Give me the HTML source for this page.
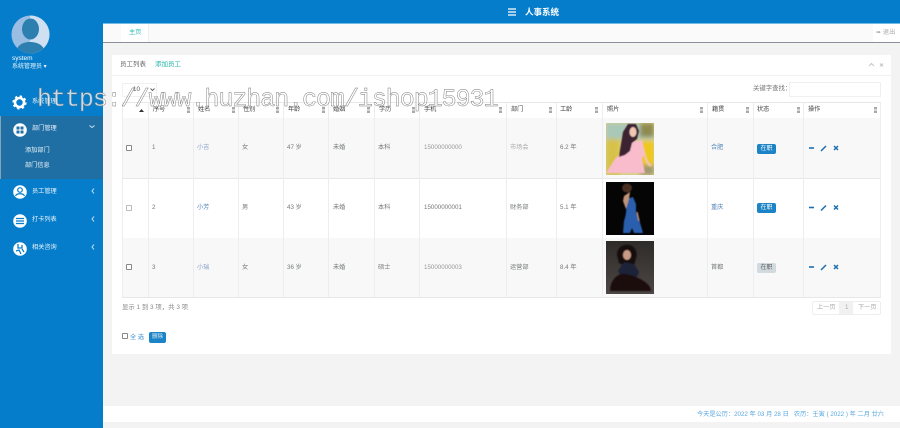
<!DOCTYPE html>
<html lang="zh"><head><meta charset="utf-8"><title>人事系统</title>
<style>
*{box-sizing:border-box}
html,body{margin:0;padding:0;width:900px;height:428px;overflow:hidden;background:#f3f3f3}
body{position:relative;font-family:"Liberation Sans","Noto Sans CJK SC",sans-serif;font-size:6.2px;color:#77797b}
#wrap{position:absolute;left:0;top:0;width:900px;height:428px;filter:blur(.35px)}
.a{position:absolute}
.t{position:absolute;white-space:nowrap;line-height:10px;height:10px;transform:translateY(-5px)}
.b{background:#fff}
.v{position:absolute;top:102px;height:195px;width:1px;background:#ededed}
.h{position:absolute;left:122px;width:759px;height:1px;background:#e7e7e7}
.th{color:#444}
.s{position:absolute;top:107px;width:3px;height:6px;background:linear-gradient(#aaa 0 40%,#fff 40% 55%,#aaa 55%)}
.m{color:#fff;font-size:6.2px;opacity:.92}
.ck{position:absolute;width:6px;height:6px;border:1px solid #888;border-radius:1px;background:#fff}
.lab{position:absolute;width:19px;height:10px;border-radius:2px;background:#1c84c6;color:#fff;font-size:6px;line-height:10px;text-align:center}
#wm{position:absolute;left:37px;top:85px;font:25px/30px "Liberation Mono",monospace;letter-spacing:-1.05px;color:rgba(255,255,255,.75);-webkit-text-stroke:.45px #777;white-space:nowrap}
</style></head><body>
<div id="wrap">
<div class="a" style="left:0;top:0;width:900px;height:23px;background:#067dcb"></div>
<div class="a" style="left:103px;top:23px;width:797px;height:1px;background:#6fbbe8"></div>
<div class="a" style="left:0;top:0;width:103px;height:428px;background:#067dcb"></div>
<!-- header title -->
<svg class="a" style="left:508px;top:8px" width="8" height="8"><path d="M0 1h8M0 4h8M0 7h8" stroke="#fff" stroke-width="1.3"/></svg>
<div class="t" style="left:525px;top:12px;color:#fff;font-size:8.5px;font-weight:bold">人事系统</div>
<!-- tabs -->
<div class="a" style="left:103px;top:24px;width:797px;height:18px;background:#fafafa"></div>
<div class="a b" style="left:121px;top:24px;width:28px;height:18px;border-right:1px solid #eee"></div>
<div class="t" style="left:129px;top:33px;color:#2bbdb0">主页</div>
<div class="a b" style="left:873px;top:24px;width:27px;height:18px"></div>
<div class="t" style="left:876px;top:33px;color:#aaa">➠ 退出</div>
<div class="a" style="left:103px;top:42px;width:797px;height:1.4px;background:#8a8f99"></div>
<!-- panel -->
<div class="a b" style="left:112px;top:55px;width:779px;height:299px"></div>
<div class="a" style="left:112px;top:75px;width:779px;height:1px;background:#f1f1f1"></div>
<div class="t" style="left:120px;top:65px;color:#666;font-size:6.5px">员工列表</div>
<div class="t" style="left:155px;top:65px;color:#1fb5a8;font-size:6.5px">添加员工</div>
<svg class="a" style="left:869px;top:62px" width="15" height="6"><path d="M0 4l2.500-2.500L5 4M11 1.500l3 3M14 1.500l-3 3" stroke="#c4c4c4" fill="none"/></svg>
<div class="a" style="left:122px;top:83px;width:35px;height:14px;border:1px solid #f0f0f0"></div>
<div class="t" style="left:133px;top:90px;color:#555">10</div>
<svg class="a" style="left:150px;top:88px" width="5" height="4"><path d="M.5.500l2 2 2-2" stroke="#666" fill="none"/></svg>
<div class="t" style="left:753px;top:89px;color:#777;font-size:6.400px">关键字查找：</div>
<div class="a b" style="left:789px;top:82px;width:92px;height:15px;border:1px solid #f0f0f0"></div>
<!-- table -->
<div class="a" style="left:122px;top:118px;width:759px;height:61px;background:#f8f8f8"></div>
<div class="a" style="left:122px;top:238px;width:759px;height:59px;background:#f8f8f8"></div>
<div class="h" style="top:102px"></div><div class="h" style="top:178px"></div><div class="h" style="top:297px"></div>
<div class="v" style="left:122px"></div><div class="v" style="left:148px"></div><div class="v" style="left:193px"></div><div class="v" style="left:238px"></div><div class="v" style="left:283px"></div><div class="v" style="left:328px"></div><div class="v" style="left:374px"></div><div class="v" style="left:419px"></div><div class="v" style="left:506px"></div><div class="v" style="left:556px"></div><div class="v" style="left:602px"></div><div class="v" style="left:707px"></div><div class="v" style="left:753px"></div><div class="v" style="left:803px"></div><div class="v" style="left:880px"></div>
<svg class="a" style="left:139px;top:108px" width="5" height="5"><path d="M0 4l2.500-3L5 4z" fill="#333"/></svg>
<div class="t th" style="left:153px;top:110px">序号</div><div class="t th" style="left:198px;top:110px">姓名</div><div class="t th" style="left:243px;top:110px">性别</div><div class="t th" style="left:288px;top:110px">年龄</div><div class="t th" style="left:333px;top:110px">婚姻</div><div class="t th" style="left:379px;top:110px">学历</div><div class="t th" style="left:424px;top:110px">手机</div><div class="t th" style="left:511px;top:110px">部门</div><div class="t th" style="left:560px;top:110px">工龄</div><div class="t th" style="left:607px;top:110px">照片</div><div class="t th" style="left:712px;top:110px">籍贯</div><div class="t th" style="left:757px;top:110px">状态</div><div class="t th" style="left:808px;top:110px">操作</div>
<i class="s" style="left:187px"></i><i class="s" style="left:232px"></i><i class="s" style="left:276px"></i><i class="s" style="left:322px"></i><i class="s" style="left:367px"></i><i class="s" style="left:412px"></i><i class="s" style="left:499px"></i><i class="s" style="left:549px"></i><i class="s" style="left:595px"></i><i class="s" style="left:700px"></i><i class="s" style="left:746px"></i><i class="s" style="left:797px"></i><i class="s" style="left:874px"></i>
<!-- row 1 -->
<div class="ck" style="left:126px;top:145px"></div>
<div class="t" style="left:152px;top:148px">1</div><div class="t" style="left:197px;top:148px;color:#8ba3cc">小吉</div><div class="t" style="left:242px;top:148px">女</div><div class="t" style="left:287px;top:148px">47 岁</div><div class="t" style="left:333px;top:148px">未婚</div><div class="t" style="left:378px;top:148px">本科</div><div class="t" style="left:424px;top:148px;color:#999">15000000000</div><div class="t" style="left:510px;top:148px;color:#aaa">市场会</div><div class="t" style="left:560px;top:148px">6.2 年</div><div class="t" style="left:711px;top:148px;color:#4f86b8">合肥</div>
<div class="lab" style="left:757px;top:144px">在职</div>
<!-- row 2 -->
<div class="ck" style="left:126px;top:205px;border-color:#bbb"></div>
<div class="t" style="left:152px;top:208px">2</div><div class="t" style="left:197px;top:208px;color:#4f86b8">小芳</div><div class="t" style="left:242px;top:208px">男</div><div class="t" style="left:287px;top:208px">43 岁</div><div class="t" style="left:333px;top:208px">未婚</div><div class="t" style="left:378px;top:208px">本科</div><div class="t" style="left:424px;top:208px">15000000001</div><div class="t" style="left:510px;top:208px">财务部</div><div class="t" style="left:560px;top:208px">5.1 年</div><div class="t" style="left:711px;top:208px;color:#4f86b8">重庆</div>
<div class="lab" style="left:757px;top:203px">在职</div>
<!-- row 3 -->
<div class="ck" style="left:126px;top:264px"></div>
<div class="t" style="left:152px;top:268px">3</div><div class="t" style="left:197px;top:268px;color:#8ba3cc">小瑞</div><div class="t" style="left:242px;top:268px">女</div><div class="t" style="left:287px;top:268px">36 岁</div><div class="t" style="left:333px;top:268px">未婚</div><div class="t" style="left:378px;top:268px">硕士</div><div class="t" style="left:424px;top:268px;color:#999">15000000003</div><div class="t" style="left:510px;top:268px">运营部</div><div class="t" style="left:560px;top:268px">8.4 年</div><div class="t" style="left:711px;top:268px">首都</div>
<div class="lab" style="left:757px;top:263px;background:#d1dade;color:#5e5e5e">在职</div>
<!-- action icons -->
<svg class="a" style="left:809px;top:144px" width="32" height="128">
<g fill="none" stroke="#1f6fb0"><path d="M0 4h5" stroke-width="1.600"/><path d="M12 7l5-5" stroke-width="1.500"/><path d="M25 2l4 4M29 2l-4 4" stroke-width="1.500"/></g>
<g transform="translate(0,59.500)" fill="none" stroke="#1f6fb0"><path d="M0 4h5" stroke-width="1.600"/><path d="M12 7l5-5" stroke-width="1.500"/><path d="M25 2l4 4M29 2l-4 4" stroke-width="1.500"/></g>
<g transform="translate(0,119)" fill="none" stroke="#1f6fb0"><path d="M0 4h5" stroke-width="1.600"/><path d="M12 7l5-5" stroke-width="1.500"/><path d="M25 2l4 4M29 2l-4 4" stroke-width="1.500"/></g>
</svg>
<!-- photo 1 -->
<svg class="a" style="left:606px;top:123px" width="48" height="52" viewBox="0 0 48 52">
<defs><filter id="f"><feGaussianBlur stdDeviation=".5"/></filter><filter id="g"><feGaussianBlur stdDeviation="2"/></filter></defs>
<rect width="48" height="52" fill="#d9cf8a"/><g filter="url(#g)"><rect width="48" height="16" fill="#a9c8b8"/><rect x="34" y="0" width="14" height="14" fill="#8f8a50"/><rect y="16" width="14" height="36" fill="#d7c24a"/><rect x="34" y="18" width="14" height="24" fill="#eec81e"/><rect x="34" y="42" width="14" height="10" fill="#a09a70"/></g>
<g filter="url(#f)"><path d="M0 50L9 36 17 28 24 20 36 17 39 28 36 36 39 50z" fill="#f9bccd"/><path d="M14 27L17 9 22 1 30 1 33 8 31 16 26 20 24 28 19 32 13 34z" fill="#3c2330"/><ellipse cx="27" cy="9" rx="3.500" ry="5" fill="#f0c8b4"/><path d="M36 24l5 15 4 4" stroke="#f2c4b8" stroke-width="2.500" fill="none"/></g>
</svg>
<!-- photo 2 -->
<svg class="a" style="left:606px;top:182px" width="48" height="53" viewBox="0 0 48 53">
<rect width="48" height="53" fill="#050505"/><g filter="url(#f)"><path d="M21 17c-1 8 0 14-3 22l-1 12h7l2-5 2 5h9l-4-14-3-6 0-9-3-7z" fill="#2a5fae"/><path d="M18 14l-1 5 3 8 3-10 1-7z" fill="#c09478"/><ellipse cx="21" cy="6" rx="5" ry="4.500" fill="#4a2f24"/><path d="M31 30l2 9" stroke="#b78c74" stroke-width="1.500"/></g>
</svg>
<!-- photo 3 -->
<svg class="a" style="left:606px;top:241px" width="48" height="53" viewBox="0 0 48 53">
<defs><linearGradient id="lg" x1="0" y1="0" x2="0" y2="1"><stop offset="0" stop-color="#2f2b29"/><stop offset="1" stop-color="#4c4744"/></linearGradient></defs>
<rect width="48" height="53" fill="url(#lg)"/><g filter="url(#f)"><path d="M11 14c0-8 6-11 12-10s9 7 7 13l-2 8-9 0-6-3z" fill="#170f0d"/><ellipse cx="21" cy="14" rx="4" ry="5" fill="#c99a84"/><path d="M12 30l6-9 10 2 5 8-2 5-15 2z" fill="#1d2238"/><path d="M4 50c0-10 7-18 15-17s26 8 26 17z" fill="#1f0c0e"/></g>
</svg>
<!-- bottom of table -->
<div class="t" style="left:122px;top:308px;color:#888;font-size:6.400px">显示 1 到 3 项，共 3 项</div>
<div class="a" style="left:812px;top:301px;width:69px;height:14px;border:1px solid #eee;border-radius:2px;background:#fff"></div>
<div class="a" style="left:839px;top:302px;width:14px;height:12px;background:#f1f1f1"></div>
<div class="t" style="left:817px;top:308px;color:#aaa">上一页</div><div class="t" style="left:845px;top:308px;color:#aaa">1</div><div class="t" style="left:858px;top:308px;color:#aaa">下一页</div>
<div class="ck" style="left:122px;top:333px"></div>
<div class="t" style="left:130px;top:338px;color:#3d8fd1">全 选</div>
<div class="a" style="left:149px;top:332px;width:17px;height:11px;border-radius:2px;background:#1c84c6;color:#dbeaf7;font-size:5.500px;line-height:11px;text-align:center">删除</div>
<!-- footer -->
<div class="a b" style="left:103px;top:406px;width:797px;height:16px"></div>
<div class="t" style="right:16px;top:415px;color:#5ba8de;font-size:6.200px">今天是公历：2022 年 03 月 28 日 &nbsp; 农历：壬寅 ( 2022 ) 年 二月 廿六</div>
<!-- sidebar -->
<svg class="a" style="left:11px;top:15px" width="39" height="39" viewBox="0 0 39 39">
<defs><clipPath id="c"><circle cx="19.500" cy="19.500" r="19"/></clipPath></defs>
<g clip-path="url(#c)"><rect width="39" height="39" fill="#9abde3"/><rect x="19" width="20" height="39" fill="#cfe0f2"/><ellipse cx="19.500" cy="14" rx="8.500" ry="10.500" fill="#2d7fb0"/><path d="M5 39c0-9 7-12 14-12s15 3 15 12z" fill="#2d7fb0"/></g></svg>
<div class="t" style="left:12px;top:59px;color:#fff;font-size:6.500px">system</div>
<div class="t" style="left:12px;top:67px;color:#fff;font-size:6px;opacity:.9">系统管理员 ▾</div>
<svg class="a" style="left:12px;top:95px" width="15" height="15" viewBox="0 0 15 15"><circle cx="7.500" cy="7.500" r="4.500" fill="none" stroke="#fff" stroke-width="2.600"/><circle cx="7.500" cy="7.500" r="6.300" fill="none" stroke="#fff" stroke-width="1.600" stroke-dasharray="2.400 2.550"/></svg>
<div class="t m" style="left:32px;top:102px">系统管理</div>
<div class="a" style="left:0;top:116px;width:103px;height:63px;background:#1f6fa5;border-left:1px solid #7fa6b8"></div>
<svg class="a" style="left:13px;top:123px" width="14" height="14"><circle cx="7" cy="7" r="6.800" fill="#fff"/><path d="M3.500 3.500h3v3h-3zM7.500 3.500h3v3h-3zM3.500 7.500h3v3h-3zM7.500 7.500h3v3h-3z" fill="#1f6fa5"/></svg>
<div class="t m" style="left:32px;top:129px">部门管理</div>
<svg class="a" style="left:89px;top:125px" width="6" height="4"><path d="M.5.500l2.500 2 2.500-2" stroke="#cfe3f0" fill="none"/></svg>
<div class="t m" style="left:25px;top:151px">添加部门</div>
<div class="t m" style="left:25px;top:166px">部门信息</div>
<svg class="a" style="left:13px;top:185px" width="14" height="14"><circle cx="7" cy="7" r="6.800" fill="#fff"/><circle cx="7" cy="5" r="2.300" fill="none" stroke="#067dcb" stroke-width="1.200"/><path d="M2.500 11c1-3 8-3 9 0" stroke="#067dcb" stroke-width="1.200" fill="none"/></svg>
<div class="t m" style="left:32px;top:192px">员工管理</div>
<svg class="a" style="left:91px;top:188px" width="4" height="6"><path d="M3 .5L1 3l2 2.500" stroke="#cfe3f0" fill="none"/></svg>
<svg class="a" style="left:13px;top:214px" width="14" height="14"><circle cx="7" cy="7" r="6.800" fill="#fff"/><path d="M3 4.500h8M3 7h8M3 9.500h8" stroke="#067dcb" stroke-width="1.300"/></svg>
<div class="t m" style="left:32px;top:220px">打卡列表</div>
<svg class="a" style="left:91px;top:216px" width="4" height="6"><path d="M3 .5L1 3l2 2.500" stroke="#cfe3f0" fill="none"/></svg>
<svg class="a" style="left:13px;top:242px" width="14" height="14"><circle cx="7" cy="7" r="6.800" fill="#fff"/><path d="M5 2v4h4V3M3 9l3-1 2 4M9 7l2 3" stroke="#067dcb" stroke-width="1.300" fill="none"/></svg>
<div class="t m" style="left:32px;top:248px">相关咨询</div>
<svg class="a" style="left:91px;top:244px" width="4" height="6"><path d="M3 .5L1 3l2 2.500" stroke="#cfe3f0" fill="none"/></svg>
<div id="wm">https://www.huzhan.com/ishop15931</div>
</div>
</body></html>
